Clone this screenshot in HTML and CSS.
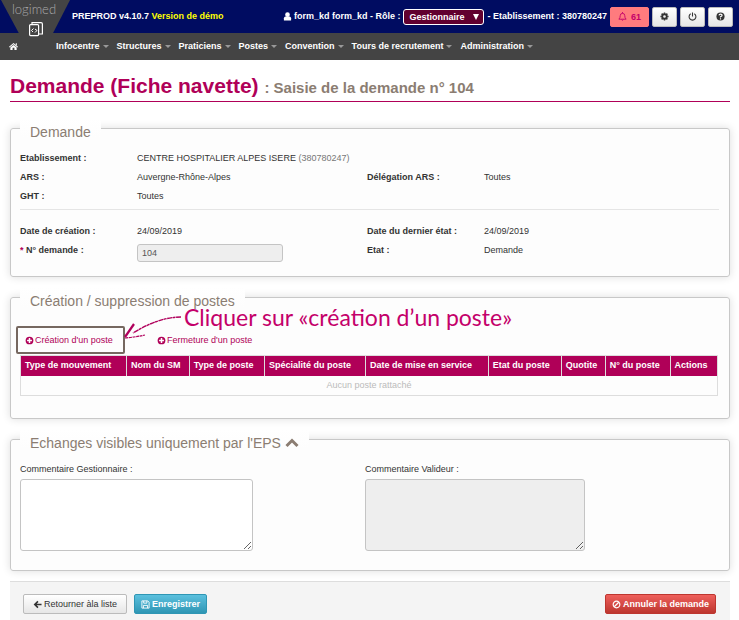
FILE: index.html
```html
<!DOCTYPE html>
<html lang="fr">
<head>
<meta charset="utf-8">
<meta name="viewport" content="width=device-width, initial-scale=1">
<title>Demande (Fiche navette)</title>
<link rel="stylesheet" href="styles.css">
</head>
<body>
<header class="topbar">
  <a class="logo" href="#" aria-label="logimed">
    <svg class="logo-shape" viewBox="0 0 72 39" aria-hidden="true">
      <path d="M1 0H70L50 39H22Z" fill="#444"/>
      <g fill="none" stroke="#fff" stroke-width="1.2">
        <rect x="29.6" y="24.6" width="9" height="11" rx="1"/>
        <path d="M32 24.500V22.600H41Q42.400 22.600 42.400 24V34H39"/>
        <path d="M33.500 28.500L31.500 30.500L33 32M35 29L37 30.500L35 32.500" stroke-width="1"/>
      </g>
    </svg>
    <span class="logo-text">logimed</span>
  </a>
  <p class="version">PREPROD v4.10.7 <span class="demo">Version de démo</span></p>
  <div class="session">
    <svg class="icon" viewBox="0 0 10 10" aria-hidden="true"><circle cx="5" cy="3" r="2.600" fill="#fff"/><path d="M1 9.500V7Q1 5 3 5H7Q9 5 9 7V9.500Z" fill="#fff"/></svg>
    <label for="role">form_kd form_kd - Rôle :</label>
    <span class="role"><select id="role"><option>Gestionnaire</option></select></span>
    <span class="etab">- Etablissement : 380780247</span>
    <button class="btn tool alert" type="button"><svg class="icon" viewBox="0 0 10 10" aria-hidden="true"><path d="M1 8H9Q7.500 6.500 7.500 4Q7.500 1.500 5 1.500Q2.500 1.500 2.500 4Q2.500 6.500 1 8ZM4 8.500Q5 10 6 8.500M5 0V1.500" fill="none" stroke="#c4006a"/></svg>61</button>
    <button class="btn tool" type="button" aria-label="Paramètres"><svg class="icon" viewBox="0 0 10 10" aria-hidden="true"><circle cx="5" cy="5" r="2.500" fill="none" stroke="#333" stroke-width="2"/><path d="M5 .5V2M5 8V9.500M.5 5H2M8 5H9.500M1.800 1.800L3 3M7 7L8.200 8.200M8.200 1.800L7 3M1.800 8.200L3 7" stroke="#333" stroke-width="1.600"/></svg></button>
    <button class="btn tool" type="button" aria-label="Déconnexion"><svg class="icon" viewBox="0 0 10 10" aria-hidden="true"><path d="M3 2A3.800 3.800 0 1 0 7 2M5 .5V5" fill="none" stroke="#333" stroke-width="1.200"/></svg></button>
    <button class="btn tool" type="button" aria-label="Aide"><svg class="icon" viewBox="0 0 10 10" aria-hidden="true"><circle cx="5" cy="5" r="4.500" fill="#333"/><path d="M3.300 3.800Q3.500 2.300 5 2.300Q6.700 2.300 6.700 3.800Q6.700 4.600 5 5.200V6.200M5 7V8.300" fill="none" stroke="#fff" stroke-width="1.300"/></svg></button>
  </div>
</header>
<nav class="menu">
  <a class="home" href="#" aria-label="Accueil"><svg class="icon" viewBox="0 0 10 10" aria-hidden="true"><path d="M5 1L10 5.300L9.300 6L5 2.500L.7 6L0 5.300ZM7.500 1.500H8.700V4L7.500 3ZM5 3.200L8.500 6V9H6V6.500H4V9H1.500V6Z" fill="#fff"/></svg></a>
  <a class="drop" href="#">Infocentre</a>
  <a class="drop" href="#">Structures</a>
  <a class="drop" href="#">Praticiens</a>
  <a class="drop" href="#">Postes</a>
  <a class="drop" href="#">Convention</a>
  <a class="drop" href="#">Tours de recrutement</a>
  <a class="drop" href="#">Administration</a>
</nav>
<main>
  <h1>Demande (Fiche navette) <small>: Saisie de la demande n° 104</small></h1>

  <fieldset class="panel">
    <legend>Demande</legend>
    <div class="facts">
      <b>Etablissement :</b><span class="wide">CENTRE HOSPITALIER ALPES ISERE <span class="code">(380780247)</span></span>
      <b>ARS :</b><span>Auvergne-Rhône-Alpes</span><b>Délégation ARS :</b><span>Toutes</span>
      <b>GHT :</b><span class="wide">Toutes</span>
    </div>
    <hr>
    <div class="facts">
      <b>Date de création :</b><span>24/09/2019</span><b>Date du dernier état :</b><span>24/09/2019</span>
      <label for="numero"><span class="required">*</span> N° demande :</label><input id="numero" class="field" type="text" value="104" readonly><b>Etat :</b><span>Demande</span>
    </div>
  </fieldset>

  <fieldset class="panel postes">
    <legend>Création / suppression de postes</legend>
    <div class="links">
      <a class="highlight" href="#"><svg class="icon" viewBox="0 0 10 10" aria-hidden="true"><circle cx="5" cy="5" r="4.300" fill="#b00058"/><path d="M5 2.300V7.700M2.300 5H7.700" stroke="#fff" stroke-width="1.700"/></svg>Création d'un poste</a>
      <a href="#"><svg class="icon" viewBox="0 0 10 10" aria-hidden="true"><circle cx="5" cy="5" r="4.300" fill="#b00058"/><path d="M5 2.300V7.700M2.300 5H7.700" stroke="#fff" stroke-width="1.700"/></svg>Fermeture d'un poste</a>
    </div>
    <table>
      <colgroup><col class="c-type"><col class="c-sm"><col class="c-poste"><col class="c-spec"><col class="c-date"><col class="c-etat"><col class="c-quot"><col class="c-num"><col class="c-act"></colgroup>
      <thead><tr><th>Type de mouvement</th><th>Nom du SM</th><th>Type de poste</th><th>Spécialité du poste</th><th>Date de mise en service</th><th>Etat du poste</th><th>Quotite</th><th>N° du poste</th><th>Actions</th></tr></thead>
      <tbody><tr><td colspan="9">Aucun poste rattaché</td></tr></tbody>
    </table>
    <div class="callout">
      <svg class="arrow" viewBox="0 0 60 30" aria-hidden="true">
        <path d="M57 4Q35 4 9 20" fill="none" stroke="#b0005c" stroke-width="1.400" stroke-dasharray="5 .6 3 .4"/>
        <path d="M10 11L1 24" fill="none" stroke="#b0005c" stroke-width="2.200"/>
        <path d="M1 25Q12 24 21 22" fill="none" stroke="#b0005c" stroke-width="1.200" stroke-dasharray="3 .6"/>
      </svg>
      <span>Cliquer sur «création d’un poste»</span>
    </div>
  </fieldset>

  <fieldset class="panel">
    <legend>Echanges visibles uniquement par l'EPS <svg class="chevron" viewBox="0 0 14 10" aria-hidden="true"><path d="M1.500 8L7 2.500L12.500 8" fill="none" stroke="#8b7d72" stroke-width="3"/></svg></legend>
    <div class="comments">
      <div class="comment"><label for="gest">Commentaire Gestionnaire :</label><textarea id="gest" class="field"></textarea></div>
      <div class="comment second"><label for="valid">Commentaire Valideur :</label><textarea id="valid" class="field" readonly></textarea></div>
    </div>
  </fieldset>

  <footer class="actions">
    <button class="btn" type="button"><svg class="icon" viewBox="0 0 10 10" aria-hidden="true"><path d="M5.500 1.500L2 5L5.500 8.500M2 5H9.500" fill="none" stroke="#333" stroke-width="1.800"/></svg>Retourner àla liste</button>
    <button class="btn save" type="button"><svg class="icon" viewBox="0 0 10 10" aria-hidden="true"><path d="M1 1H7.500L9 2.500V9H1ZM3 1V3.500H6.500V1M2.700 9V6H7.300V9" fill="none" stroke="#fff"/></svg>Enregistrer</button>
    <button class="btn cancel" type="button"><svg class="icon" viewBox="0 0 10 10" aria-hidden="true"><circle cx="5" cy="5" r="3.700" fill="none" stroke="#fff" stroke-width="1.300"/><path d="M2.500 7.500L7.500 2.500" stroke="#fff" stroke-width="1.300"/></svg>Annuler la demande</button>
  </footer>
</main>
</body>
</html>
```
FILE: styles.css
```css
* { box-sizing: border-box; }
body {
  margin: 0;
  background: #fff;
  color: #333;
  font: 9px/19px "Liberation Sans", Arial, sans-serif;
}
a { color: inherit; text-decoration: none; }
button, input, select, textarea { font: inherit; color: inherit; }
.icon { width: 9px; height: 9px; flex: none; }

.topbar {
  position: relative;
  display: flex;
  align-items: center;
  height: 33px;
  padding-right: 6px;
  background: #000c61;
  color: #fff;
  font-weight: bold;
  white-space: nowrap;
}
.logo { width: 72px; height: 33px; flex: none; text-align: center; }
.logo-shape { position: absolute; left: 0; top: 0; width: 72px; height: 39px; z-index: 1; }
.logo-text {
  position: absolute;
  left: 12px;
  top: 0;
  z-index: 2;
  color: #aaa;
  font: 300 13px/19px Lato, sans-serif;
}
.version { margin: 0; }
.demo { color: #ff0; }
.session { display: flex; align-items: center; gap: 3px; margin-left: auto; }
.session > .icon { margin-right: -1px; }
.role { position: relative; }
.role select {
  display: block;
  appearance: none;
  width: 81px;
  height: 16px;
  padding: 0 5px;
  border: 1px solid #fff;
  border-radius: 3px;
  background: #61002f;
  line-height: 14px;
}
.role::after {
  content: "";
  position: absolute;
  right: 5px;
  top: 5px;
  border: 3px solid transparent;
  border-top: 6px solid #fff;
  border-bottom: 0;
  pointer-events: none;
}

.btn {
  display: flex;
  align-items: center;
  justify-content: center;
  gap: 2px;
  height: 20px;
  padding: 0 9px;
  border: 1px solid #bbb;
  border-radius: 2px;
  background: linear-gradient(#fff, #e6e6e6);
  line-height: 18px;
}
.btn.tool { padding: 0 7px; }
.btn.alert { gap: 4px; border-color: #ff7b7e; background: #ff7b7e; color: #c4006a; }
.btn.save { padding: 0 6px; border-color: #2f96b4; background: linear-gradient(#5bc0de, #2f96b4); color: #fff; font-weight: bold; }
.btn.cancel { margin-left: auto; padding: 0 6px; border-color: #bd362f; background: linear-gradient(#ee5f5b, #bd362f); color: #fff; font-weight: bold; }

.menu {
  display: flex;
  align-items: center;
  height: 27px;
  padding-left: 9px;
  background: #444;
  color: #fff;
  font-weight: bold;
  white-space: nowrap;
}
.home { display: flex; width: 47px; }
.drop { display: flex; align-items: center; gap: 3px; padding-right: 8px; }
.drop::after { content: ""; border: 3px solid transparent; border-top-color: #999; border-bottom: 0; }

main { padding: 0 9px 0 10px; }
h1 {
  margin: 0 0 16px;
  padding: 13px 0 1px;
  border-bottom: 1px solid #b00058;
  color: #b00058;
  font-size: 21px;
  line-height: 25px;
}
h1 small { color: #8b7d72; font-size: 15px; }

.panel {
  position: relative;
  min-width: 0;
  margin: 0 0 10px;
  padding: 11px 10px 14px 9px;
  border: 1px solid #c8c8c8;
  border-radius: 3px;
  background: #fdfdfd;
  box-shadow: 0 0 8px #ddd;
}
legend {
  padding: 8px 10px 0;
  background: linear-gradient(#fff, #fdfdfd);
  color: #8b7d72;
  font-size: 14px;
  line-height: 12px;
}
.chevron { width: 14px; height: 10px; }
.facts { display: grid; grid-template-columns: 117px 230px 117px 1fr; align-items: start; }
.facts b, .facts label { font-weight: bold; }
.wide { grid-column: span 3; }
.code { color: #777; }
.required { color: #b00058; }
hr { margin: 3px 0 12px; border: 0; border-top: 1px solid #e5e5e5; }
.field { border: 1px solid #c4c4c4; border-radius: 3px; background: #fff; outline: 0; }
.field:read-only { background: #eee; }
input.field { width: 146px; height: 18px; margin-top: 3px; padding: 0 4px; color: #555; }

.postes { padding: 24px 11px 22px 9px; }
.links { display: grid; grid-template-columns: 132px 1fr; padding: 0 5px 5px; color: #b00058; }
.links a { position: relative; display: flex; align-items: center; gap: 1px; justify-self: start; }
.highlight::before {
  content: "";
  position: absolute;
  inset: -5px -12px -4px -9px;
  border: 2px solid #766860;
  border-radius: 2px;
}
table { width: 100%; table-layout: fixed; border-collapse: collapse; border: 1px solid #ddd; }
th { height: 20px; padding: 0 0 0 4px; border: 1px solid #ddd; border-bottom: 0; background: #b00058; color: #fff; text-align: left; white-space: nowrap; }
td { height: 20px; padding: 0; color: #bbb; text-align: center; }
.c-type { width: 15.2%; }
.c-sm { width: 9%; }
.c-poste { width: 10.8%; }
.c-spec { width: 14.5%; }
.c-date { width: 17.6%; }
.c-etat { width: 10.5%; }
.c-quot { width: 6.3%; }
.c-num { width: 9.3%; }
.c-act { width: 6.8%; }

.callout {
  position: absolute;
  left: 113px;
  top: -2px;
  display: flex;
  align-items: flex-start;
  color: #c4006a;
  font: 23px/24px Lato, "Noto Sans", sans-serif;
  white-space: nowrap;
}
.arrow { width: 60px; height: 30px; margin-top: 8px; }

.comments { display: grid; grid-template-columns: 345px 1fr; }
.comment { display: flex; flex-direction: column; align-items: flex-start; }
textarea.field { width: 233px; height: 72px; margin: 0 0 5px; padding: 4px; resize: both; }
.second textarea.field { width: 220px; }

.actions {
  display: flex;
  gap: 7px;
  padding: 12px 14px 6px 13px;
  border-top: 1px solid #ddd;
  background: #f4f4f4;
}
```
